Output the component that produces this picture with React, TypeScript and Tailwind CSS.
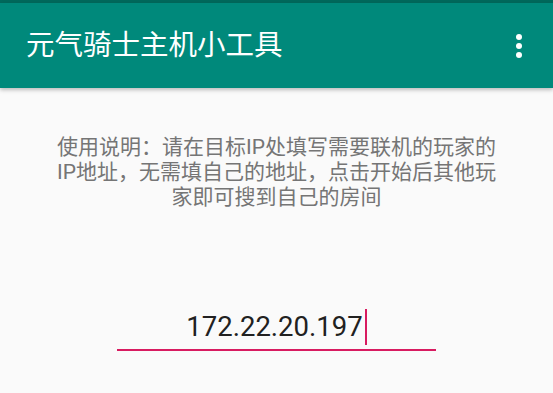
import React from 'react';

const MoreIcon: React.FC = () => (
  <div className="flex flex-col items-center gap-[3px]">
    <span className="block h-[6px] w-[6px] rounded-full bg-white" />
    <span className="block h-[6px] w-[6px] rounded-full bg-white" />
    <span className="block h-[6px] w-[6px] rounded-full bg-white" />
  </div>
);

export default function App() {
  return (
    <div
      className="flex h-[393px] w-[553px] flex-col overflow-hidden bg-[#fafafa]"
      style={{ fontFamily: 'Roboto, "Noto Sans CJK SC", sans-serif' }}
    >
      {/* status bar strip */}
      <div className="h-[3px] bg-[#00695c]" />

      {/* app bar */}
      <div className="relative z-10 flex h-[85px] items-center justify-between bg-[#00897b] pl-[26px] pr-[31px] shadow-[0_2px_4px_rgba(0,0,0,0.25)]">
        <h1 className="pt-[2px] text-[28.5px] font-normal leading-none text-white">元气骑士主机小工具</h1>
        <MoreIcon />
      </div>

      {/* body */}
      <div className="flex flex-col items-center">
        <p className="mt-[47px] w-[452px] text-center text-[21px] leading-[25px] text-[#757575]">
          使用说明：请在目标IP处填写需要联机的玩家的IP地址，无需填自己的地址，点击开始后其他玩家即可搜到自己的房间
        </p>

        <div className="mt-[98px] w-[319px] border-b-2 border-[#d81b60] pb-[5px]">
          <div className="flex h-[36px] items-center justify-center pt-[2px]">
            <span className="text-[27.5px] leading-[36px] text-[#212121]">172.22.20.197</span>
            <span className="ml-[2px] block h-[36px] w-[2px] bg-[#d81b60]" />
          </div>
        </div>
      </div>
    </div>
  );
}
